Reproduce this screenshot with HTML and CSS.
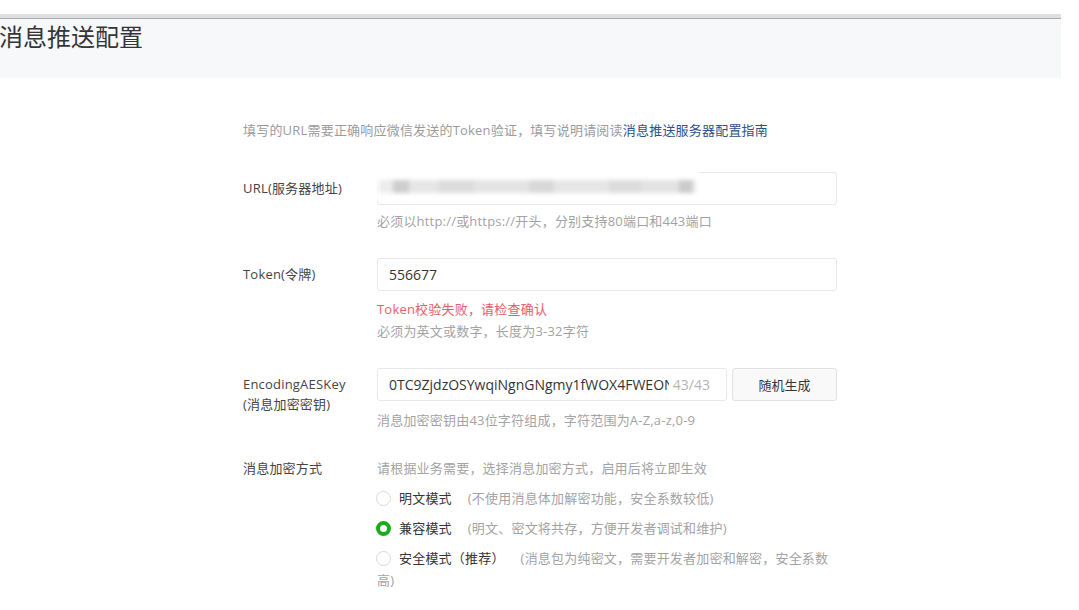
FILE: index.html
```html
<!DOCTYPE html>
<html lang="zh-CN">
<head>
    <meta charset="UTF-8">
    <title>消息推送配置</title>
    <link rel="stylesheet" href="styles.css">
</head>
<body>
    <div class="page">
        <div class="topbar"></div>
        <div class="page-hd">
            <h2>消息推送配置</h2>
        </div>

        <div class="form">
            <p class="intro">填写的URL需要正确响应微信发送的Token验证，填写说明请阅读<a href="#">消息推送服务器配置指南</a></p>

            <div class="row">
                <label class="row-label">URL(服务器地址)</label>
                <div class="row-field">
                    <div class="input-box">
                        <input class="input" type="text" value="">
                        <span class="masked"><span class="masked-bar"></span></span>
                    </div>
                    <p class="tips">必须以http://或https://开头，分别支持80端口和443端口</p>
                </div>
            </div>

            <div class="row">
                <label class="row-label">Token(令牌)</label>
                <div class="row-field">
                    <input class="input" type="text" value="556677">
                    <p class="tips tips-error">Token校验失败，请检查确认</p>
                    <p class="tips tips-first">必须为英文或数字，长度为3-32字符</p>
                </div>
            </div>

            <div class="row">
                <label class="row-label row-label-2">EncodingAESKey<br>(消息加密密钥)</label>
                <div class="row-field">
                    <div class="key-line">
                        <div class="input-box input-box-key">
                            <input class="input input-key" type="text" value="0TC9ZjdzOSYwqiNgnGNgmy1fWOX4FWEONkzh7lQ2b1R">
                            <span class="counter">43/43</span>
                        </div>
                        <button class="btn" type="button">随机生成</button>
                    </div>
                    <p class="tips tips-key">消息加密密钥由43位字符组成，字符范围为A-Z,a-z,0-9</p>
                </div>
            </div>

            <div class="row row-mode">
                <label class="row-label row-label-text">消息加密方式</label>
                <div class="row-field">
                    <p class="mode-intro">请根据业务需要，选择消息加密方式，启用后将立即生效</p>
                    <label class="radio">
                        <span class="radio-icon"></span>明文模式<span class="radio-desc">(不使用消息体加解密功能，安全系数较低)</span>
                    </label>
                    <label class="radio checked">
                        <span class="radio-icon"></span>兼容模式<span class="radio-desc">(明文、密文将共存，方便开发者调试和维护)</span>
                    </label>
                    <label class="radio">
                        <span class="radio-icon"></span>安全模式（推荐）<span class="radio-desc">(消息包为纯密文，需要开发者加密和解密，安全系数</span><span class="radio-desc-end">高)</span>
                    </label>
                </div>
            </div>
        </div>
    </div>
</body>
</html>
```

FILE: styles.css
```css
* {
    margin: 0;
    padding: 0;
    box-sizing: border-box;
}

body {
    font-family: "Open Sans", "Noto Sans CJK SC", sans-serif;
    color: #333;
    background: #fff;
    letter-spacing: 0.2px;
}

.page {
    width: 1061px;
}

.topbar {
    height: 19px;
    border-top: 14px solid #fff;
    border-bottom: 1px solid #acacac;
    background: #dfdfdf;
}

.page-hd {
    height: 59px;
    padding-top: 2px;
    background: #f7f8fa;
}

.page-hd h2 {
    font-size: 24px;
    font-weight: normal;
    line-height: 32px;
    color: #353535;
    margin-left: -1px;
    letter-spacing: 0;
}

.form {
    width: 594px;
    margin-left: 243px;
    padding-top: 41px;
}

.intro {
    font-size: 13px;
    line-height: 22px;
    color: #9b9b9b;
    margin-bottom: 31px;
}

.intro a {
    color: #2d5088;
    text-decoration: none;
}

.row {
    display: grid;
    grid-template-columns: 134px 1fr;
    margin-bottom: 26px;
}

.row-label {
    font-size: 13px;
    line-height: 33px;
    color: #444;
}

.row-label-2 {
    line-height: 20px;
    padding-top: 6px;
}

.row-label-text {
    line-height: 22px;
}

.input {
    display: block;
    width: 100%;
    height: 33px;
    padding: 0 11px;
    border: 1px solid #e4e8eb;
    border-radius: 3px;
    font-family: inherit;
    font-size: 14px;
    color: #353535;
    background: #fff;
    outline: none;
}

.input-box {
    position: relative;
}

/* blurred-out server address */
.masked {
    position: absolute;
    left: -2px;
    top: -6px;
    width: 324px;
    height: 34px;
    background: #fff;
    filter: blur(2px);
}

.masked-bar {
    position: absolute;
    left: 4px;
    top: 14px;
    width: 318px;
    height: 13px;
    background: linear-gradient(to right,
        #ececec 0, #ececec 14px,
        #cdcdcd 14px, #cdcdcd 30px,
        #e6e6e6 30px, #e6e6e6 60px,
        #dcdcdc 60px, #dcdcdc 95px,
        #e4e4e4 95px, #e4e4e4 150px,
        #d8d8d8 150px, #d8d8d8 175px,
        #e6e6e6 175px, #e6e6e6 230px,
        #dcdcdc 230px, #dcdcdc 262px,
        #e3e3e3 262px, #e3e3e3 300px,
        #cbcbcb 300px, #cbcbcb 314px,
        #f2f2f2 314px);
}

.tips {
    font-size: 13px;
    line-height: 22px;
    color: #a3a3a3;
    margin-top: 5px;
}

.tips-error {
    color: #e2606a;
    margin-top: 7px;
}

.tips-first {
    margin-top: 0;
}

.tips-key {
    margin-top: 8px;
}

.key-line {
    display: flex;
    gap: 5px;
}

.input-box-key {
    width: 350px;
}

.input-key {
    padding-right: 57px;
    letter-spacing: 0;
}

.counter {
    position: absolute;
    right: 17px;
    top: 0;
    font-size: 14px;
    line-height: 33px;
    color: #b5b5b5;
    letter-spacing: 0;
}

.btn {
    width: 105px;
    height: 33px;
    border: 1px solid #e2e2e2;
    border-radius: 3px;
    background: #f9f9f9;
    font-family: inherit;
    font-size: 13px;
    color: #353535;
}

.mode-intro {
    font-size: 13px;
    line-height: 22px;
    color: #a3a3a3;
}

.radio {
    display: block;
    margin-top: 8px;
    font-size: 13px;
    line-height: 22px;
    color: #353535;
}

.radio-icon {
    display: inline-block;
    width: 15px;
    height: 15px;
    margin: 0 8px 0 -1px;
    border: 1px solid #d9d9d9;
    border-radius: 50%;
    vertical-align: -3px;
}

.radio.checked .radio-icon {
    border: 4px solid #1aad19;
}

.radio-desc {
    margin-left: 16px;
    color: #a3a3a3;
}

.radio-desc-end {
    display: block;
    color: #a3a3a3;
}
```
